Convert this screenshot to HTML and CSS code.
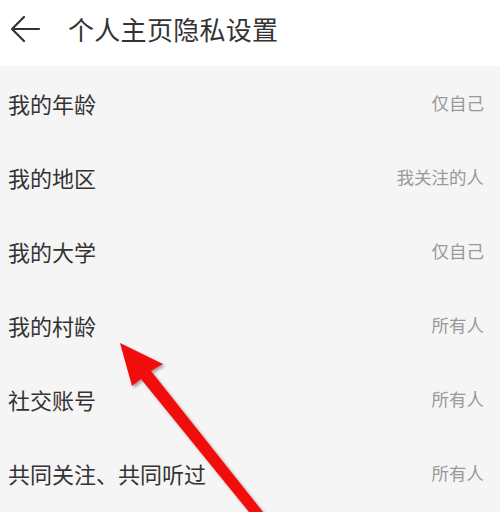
FILE: index.html
```html
<!DOCTYPE html>
<html lang="zh">
<head>
<meta charset="utf-8">
<link rel="stylesheet" href="styles.css">
</head>
<body>
<div class="page">
  <header class="topbar">
    <svg class="back" width="30" height="30" viewBox="0 0 30 30">
      <path d="M28 14 H2 M13 2 L1 14 L13 26" fill="none" stroke="#333" stroke-width="2.2" stroke-linecap="round" stroke-linejoin="round"/>
    </svg>
    <h1 class="title">个人主页隐私设置</h1>
  </header>
  <ul class="list">
    <li class="row"><span class="label">我的年龄</span><span class="value">仅自己</span></li>
    <li class="row"><span class="label">我的地区</span><span class="value">我关注的人</span></li>
    <li class="row"><span class="label">我的大学</span><span class="value">仅自己</span></li>
    <li class="row"><span class="label">我的村龄</span><span class="value">所有人</span></li>
    <li class="row"><span class="label">社交账号</span><span class="value">所有人</span></li>
    <li class="row"><span class="label">共同关注、共同听过</span><span class="value">所有人</span></li>
  </ul>
  <svg class="pointer" width="500" height="512" viewBox="0 0 500 512">
    <defs>
      <filter id="sh" x="-20%" y="-20%" width="140%" height="140%">
        <feDropShadow dx="2" dy="2" stdDeviation="1.5" flood-color="#000" flood-opacity="0.35"/>
      </filter>
    </defs>
    <polygon filter="url(#sh)" fill="#f20f0f" points="120,343 163,364 151,371 263,512 249,512 141,379 132,386"/>
  </svg>
</div>
</body>
</html>
```
FILE: styles.css
```css
html, body {
  margin: 0;
  padding: 0;
}
body {
  width: 500px;
  height: 512px;
  overflow: hidden;
  background: #f5f5f5;
  font-family: "Noto Sans CJK SC", "Noto Sans", sans-serif;
}
.page {
  position: relative;
  width: 500px;
  height: 512px;
  overflow: hidden;
}
.topbar {
  height: 66px;
  background: #ffffff;
  display: flex;
  align-items: center;
  padding-left: 11px;
  box-sizing: border-box;
}
.back {
  display: block;
  margin-top: -7px;
}
.title {
  margin: 0 0 0 27px;
  font-size: 26px;
  font-weight: 400;
  color: #333333;
  line-height: 1;
  margin-top: -8px;
  letter-spacing: 0.3px;
}
.list {
  list-style: none;
  margin: 0;
  padding: 0;
  background: #f5f5f5;
}
.row {
  height: 74px;
  display: flex;
  align-items: center;
  justify-content: space-between;
  padding: 0 16px 0 8px;
}
.label {
  font-size: 22px;
  color: #333333;
  line-height: 1;
}
.value {
  font-size: 17.5px;
  color: #999999;
  line-height: 1;
}
.pointer {
  position: absolute;
  left: 0;
  top: 0;
  pointer-events: none;
}
```
